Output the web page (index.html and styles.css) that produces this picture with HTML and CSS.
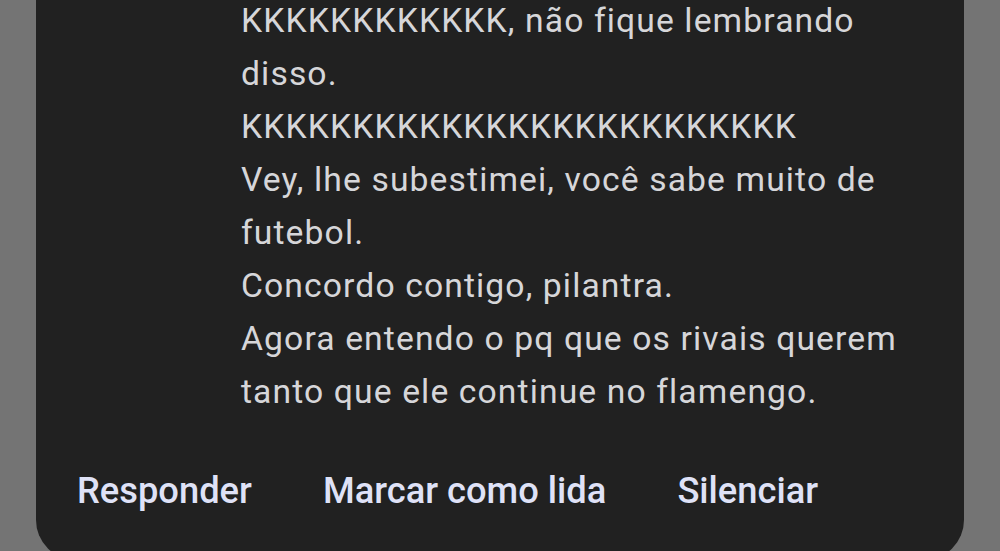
FILE: index.html
```html
<!DOCTYPE html>
<html lang="pt">
<head>
<meta charset="utf-8">
<link rel="stylesheet" href="styles.css">
</head>
<body>
<div class="page">
  <div class="card">
    <div class="messages">
      <p class="msg">KKKKKKKKKKKK, não fique lembrando disso.</p>
      <p class="msg">KKKKKKKKKKKKKKKKKKKKKKKKK</p>
      <p class="msg">Vey, lhe subestimei, você sabe muito de futebol.</p>
      <p class="msg">Concordo contigo, pilantra.</p>
      <p class="msg">Agora entendo o pq que os rivais querem tanto que ele continue no flamengo.</p>
    </div>
    <div class="actions">
      <span class="action">Responder</span>
      <span class="action">Marcar como lida</span>
      <span class="action">Silenciar</span>
    </div>
  </div>
</div>
</body>
</html>
```
FILE: styles.css
```css
html, body {
  margin: 0;
  padding: 0;
  background: #747474;
  overflow: hidden;
  width: 1000px;
  height: 551px;
}
.page {
  padding: 0 36px;
}
.card {
  margin-top: -6px;
  background: #212121;
  border-radius: 0 0 40px 40px;
  height: 566px;
  box-sizing: border-box;
  padding: 0 0 0 41px;
  font-family: Roboto, "Noto Sans", sans-serif;
}
.messages {
  margin-left: 164px;
  width: 690px;
}
.msg {
  margin: 0;
  font-size: 33.7px;
  letter-spacing: 1.1px;
  line-height: 53px;
  color: #d6d6d9;
}
.actions {
  display: flex;
  gap: 71px;
  margin-top: 46px;
}
.action {
  font-size: 36.3px;
  font-weight: 500;
  line-height: 53px;
  color: #dfe2f7;
}
```
